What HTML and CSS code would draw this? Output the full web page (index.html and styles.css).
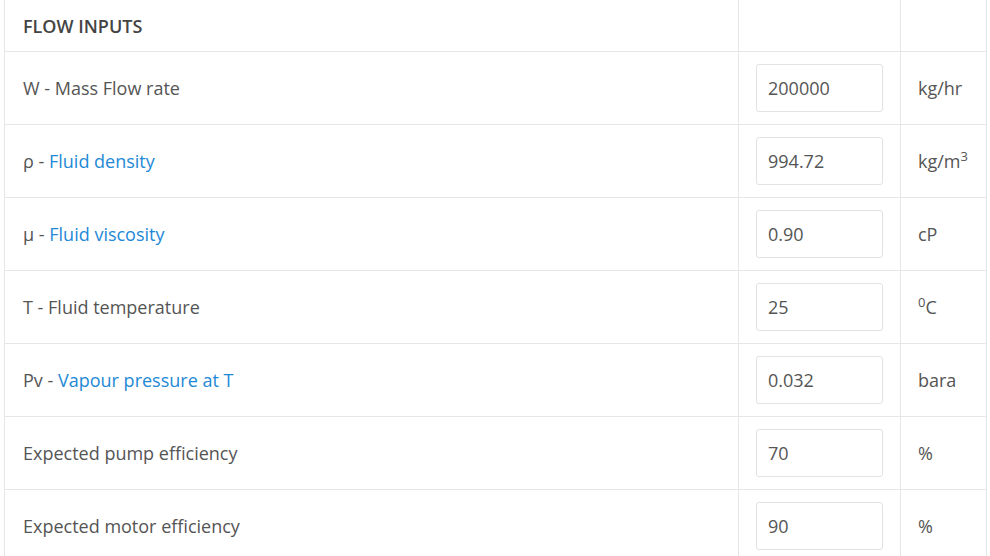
FILE: index.html
```html
<!DOCTYPE html>
<html lang="en">
<head>
  <meta charset="UTF-8">
  <meta name="viewport" content="width=device-width, initial-scale=1.0">
  <title>Flow Inputs</title>
  <link rel="stylesheet" href="styles.css">
</head>
<body>
  <div class="wrap">
    <table class="inputs">
      <colgroup>
        <col class="c-label">
        <col class="c-val">
        <col class="c-unit">
      </colgroup>
      <tr class="head">
        <th>FLOW INPUTS</th>
        <th></th>
        <th></th>
      </tr>
      <tr>
        <td>W - Mass Flow rate</td>
        <td class="col-val"><input type="text" value="200000"></td>
        <td class="col-unit">kg/hr</td>
      </tr>
      <tr>
        <td>&rho; - <a href="#">Fluid density</a></td>
        <td class="col-val"><input type="text" value="994.72"></td>
        <td class="col-unit">kg/m<sup>3</sup></td>
      </tr>
      <tr>
        <td>&mu; - <a href="#">Fluid viscosity</a></td>
        <td class="col-val"><input type="text" value="0.90"></td>
        <td class="col-unit">cP</td>
      </tr>
      <tr>
        <td>T - Fluid temperature</td>
        <td class="col-val"><input type="text" value="25"></td>
        <td class="col-unit"><sup>0</sup>C</td>
      </tr>
      <tr>
        <td>Pv - <a href="#">Vapour pressure at T</a></td>
        <td class="col-val"><input type="text" value="0.032"></td>
        <td class="col-unit">bara</td>
      </tr>
      <tr>
        <td>Expected pump efficiency</td>
        <td class="col-val"><input type="text" value="70"></td>
        <td class="col-unit">%</td>
      </tr>
      <tr>
        <td>Expected motor efficiency</td>
        <td class="col-val"><input type="text" value="90"></td>
        <td class="col-unit">%</td>
      </tr>
    </table>
  </div>
</body>
</html>
```

FILE: styles.css
```css
body {
  margin: 0;
  background: #fff;
  font-family: "Open Sans", "Liberation Sans", sans-serif;
  color: #555;
}
.wrap {
  padding: 0 4px 0 4px;
}
.inputs {
  width: 982px;
  table-layout: fixed;
  border-collapse: collapse;
  border-left: 1px solid #e6e6e6;
  border-right: 1px solid #e6e6e6;
  font-size: 18px;
}
.c-label {
  width: 734px;
}
.c-val {
  width: 162px;
}
.c-unit {
  width: 86px;
}
.inputs th,
.inputs td {
  border-bottom: 1px solid #e6e6e6;
  border-right: 1px solid #e6e6e6;
  padding: 12px 18px;
  text-align: left;
  vertical-align: middle;
}
.inputs td {
  height: 48px;
}
.inputs td.col-val {
  padding-left: 17px;
  padding-right: 16px;
}
.inputs td.col-unit {
  padding-left: 17px;
  padding-right: 0;
}
.head th {
  height: 28px;
  padding-top: 12px;
  padding-bottom: 11px;
  font-size: 18px;
  font-weight: 600;
  color: #444;
}
.inputs input {
  box-sizing: border-box;
  width: 127px;
  height: 48px;
  padding: 0 11px;
  border: 1px solid #e2e2e2;
  border-radius: 3px;
  font-family: inherit;
  font-size: 18px;
  color: #555;
  background: #fff;
}
.inputs a {
  color: #2389d6;
  text-decoration: none;
}
sup {
  font-size: 13px;
  line-height: 0;
}
```
